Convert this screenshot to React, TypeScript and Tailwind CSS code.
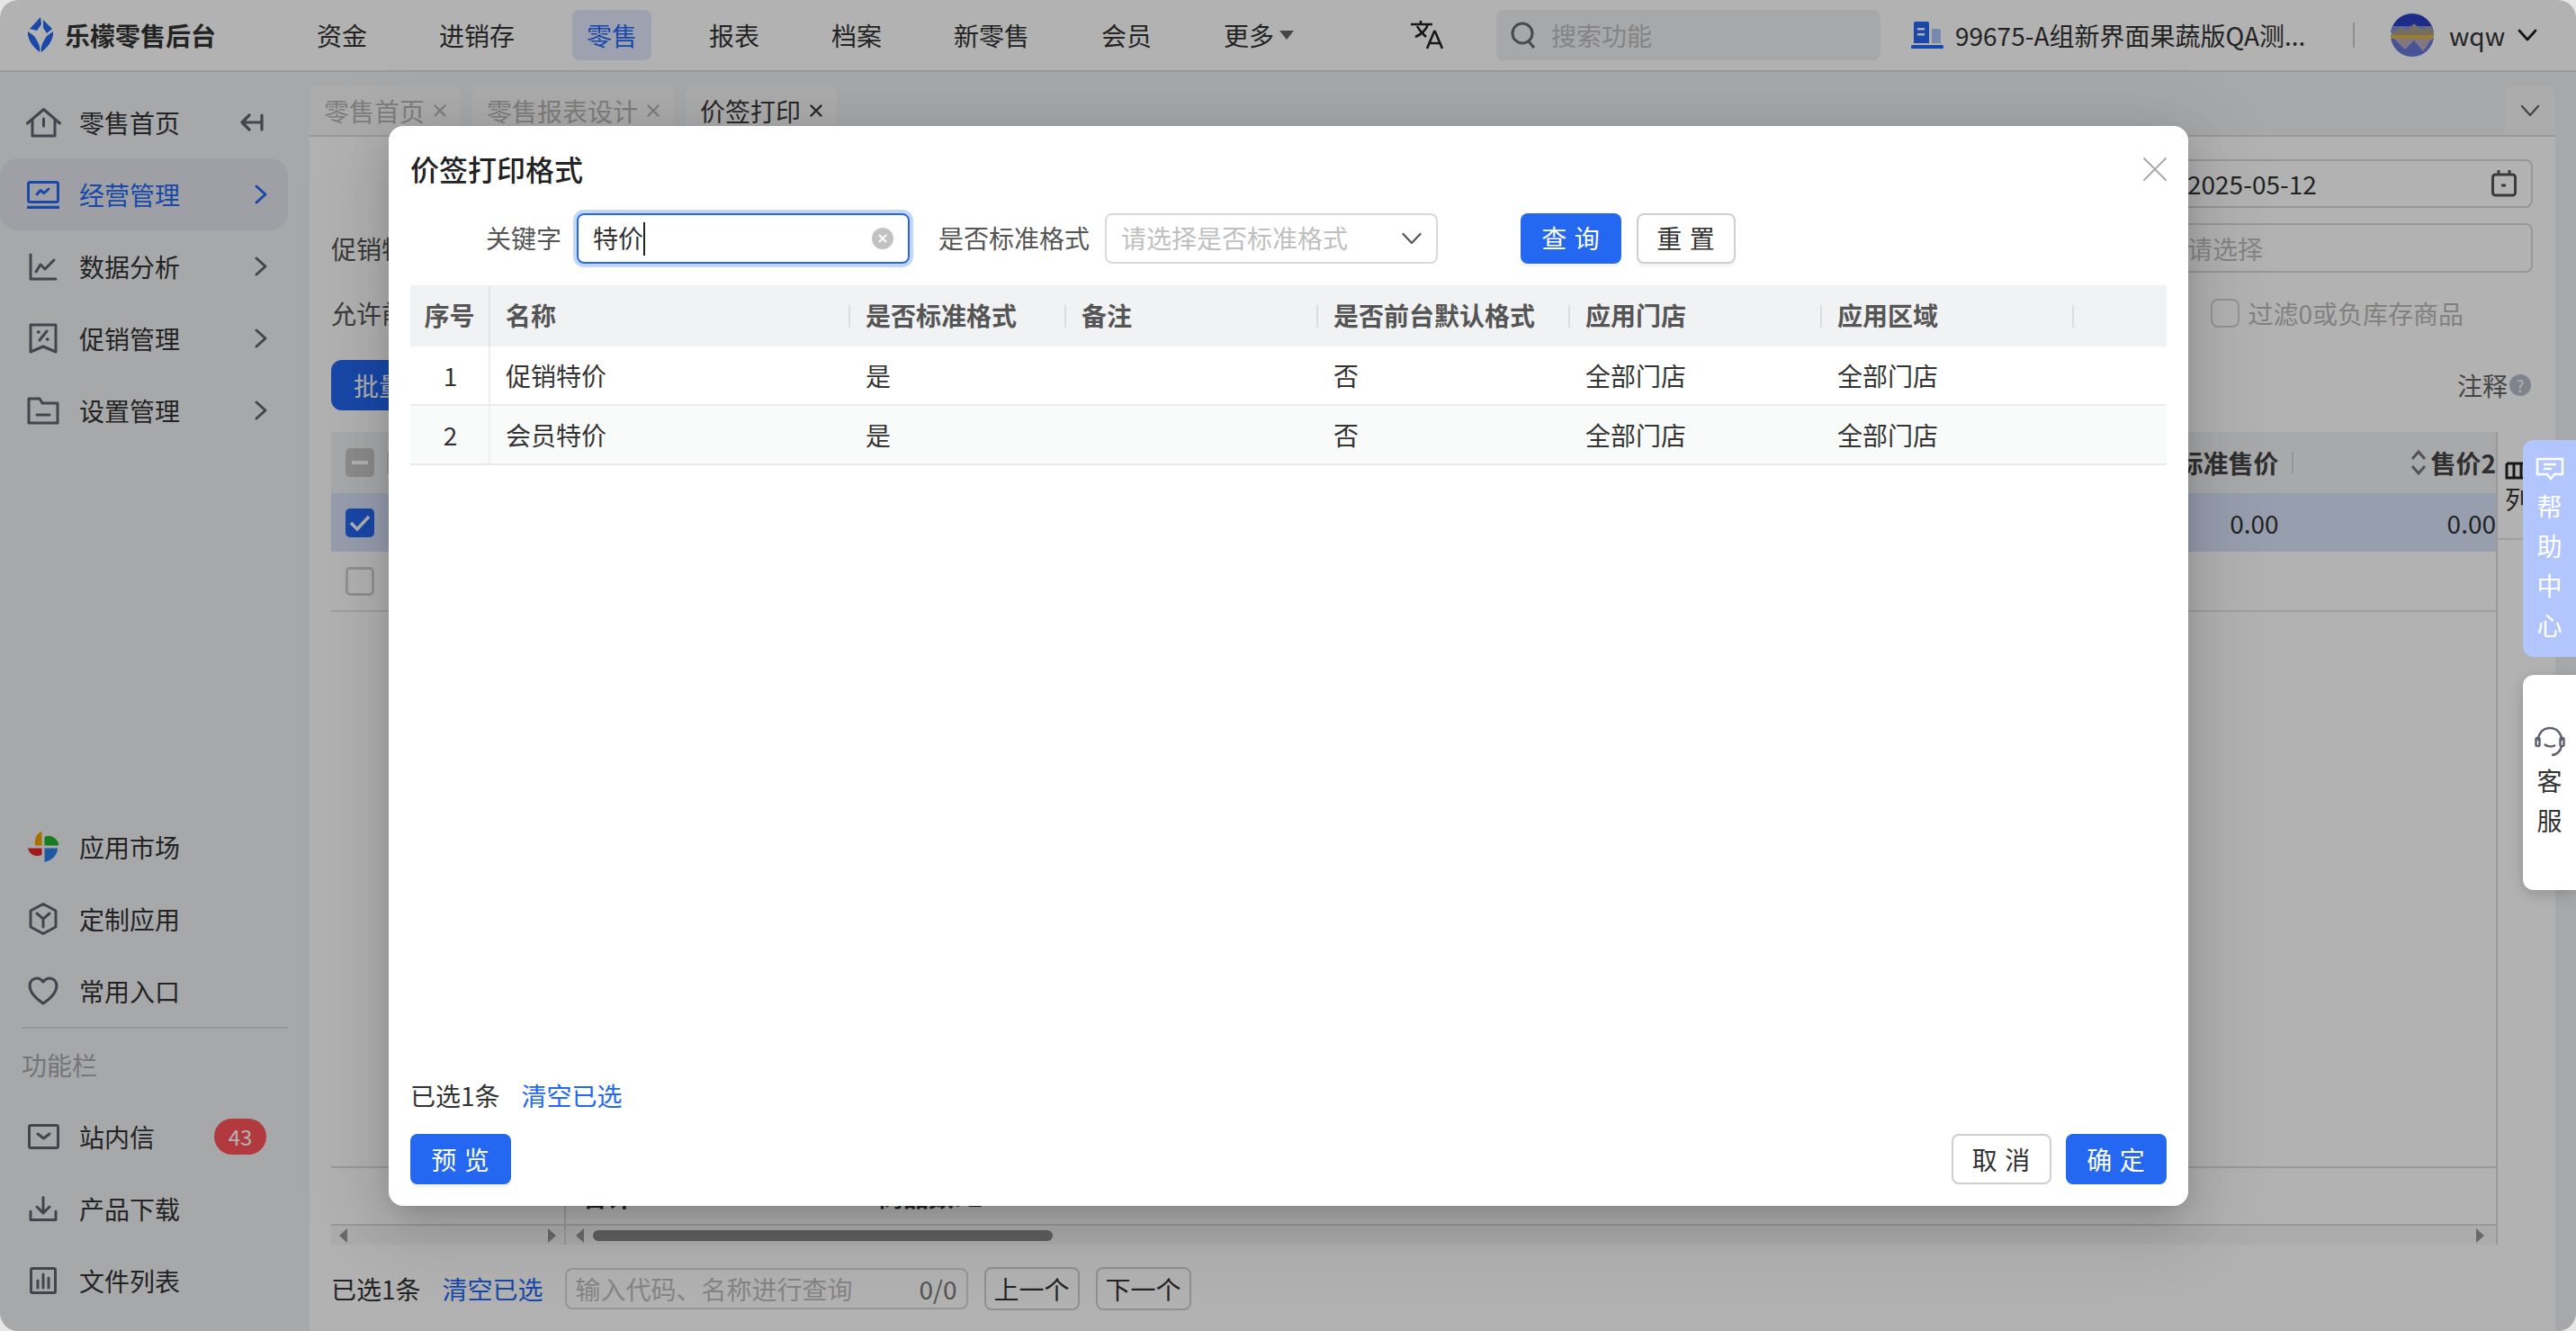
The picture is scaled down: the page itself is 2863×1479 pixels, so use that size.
import React from "react";

type IP = { w: number; h: number; vb?: string; sw?: number; children: React.ReactNode; cls?: string };
const Ic = ({ w, h, vb, sw = 3, children, cls }: IP) => (
  <svg width={w} height={h} viewBox={vb ?? `0 0 ${w} ${h}`} fill="none" stroke="currentColor" strokeWidth={sw} strokeLinecap="round" strokeLinejoin="round" className={cls}>
    {children}
  </svg>
);

const Chevron = ({ blue }: { blue?: boolean }) => (
  <span className={blue ? "ml-auto mr-[18px] text-[#2468f2]" : "ml-auto mr-[18px] text-[#5f6270]"}>
    <Ic w={24} h={24} sw={3}><path d="M7 3 L17 12 L7 21" /></Ic>
  </span>
);

const icons: Record<string, React.ReactNode> = {
  home: <Ic w={39} h={33}><path d="M1.5 17 L19.5 1.5 L37.5 17" /><path d="M7 14 V31 H32 V14" /><path d="M19.5 12 V20" /></Ic>,
  monitor: <Ic w={36} h={31}><rect x="1.5" y="1.5" width="33" height="22" rx="2" /><path d="M1 29.5 H35" strokeWidth="3.4" /><path d="M11 15 L15 10.5 L19 13.5 L24 9" /></Ic>,
  chart: <Ic w={32} h={31}><path d="M2 2 V29 H30" /><path d="M8 21 L13 13 L18 18 L28 8" /></Ic>,
  tag: <Ic w={32} h={35}><path d="M2 2 H30 V32 L16 26 L2 32 Z" /><path d="M20 9 L12 19" /><path d="M10.5 10 h.5 M20.5 18 h.5" strokeWidth="3.4" /></Ic>,
  folder: <Ic w={36} h={31}><path d="M2 2 H14 L17 7 H34 V29 H2 Z" /><path d="M11 20 H25" strokeWidth="3" /></Ic>,
  market: (
    <svg width="34" height="34" viewBox="0 0 34 34">
      <path d="M15.500 0 C9 2 7 9 8 15.500 H15.500 Z" fill="#f2a100" />
      <path d="M18.500 6 C24 3 31 6 34 13 V15.500 H18.500 Z" fill="#1fb32a" />
      <path d="M0 18.500 H15.500 V26 C9 29 2 26 0 18.500 Z" fill="#e8262a" />
      <path d="M18.500 18.500 H33 C33 27 26 32 18.500 34 Z" fill="#2c7ee8" />
    </svg>
  ),
  hex: <Ic w={32} h={36}><path d="M16 1.5 L30 9 V27 L16 34.5 L2 27 V9 Z" /><path d="M9 12 L16 18 L23 12 M16 18 V27" /></Ic>,
  heart: <Ic w={34} h={32}><path d="M17 30 C8 24 2 18 2 10 C2 5 6 2 10 2 C13 2 15 3.500 17 6 C19 3.500 21 2 24 2 C28 2 32 5 32 10 C32 18 26 24 17 30 Z" /></Ic>,
  mail: <Ic w={35} h={28}><rect x="1.5" y="1.5" width="32" height="25" rx="2" /><path d="M11 11 L17.500 16 L24 11" /></Ic>,
  down: <Ic w={32} h={28}><path d="M16 1.500 V18 M9 12 L16 19 L23 12" /><path d="M2 17 V26.500 H30 V17" /></Ic>,
  bars: <Ic w={30} h={30}><rect x="1.500" y="1.500" width="27" height="27" rx="1.500" /><path d="M9 15 V23 M15 8 V23 M21 12 V23" /></Ic>,
};

const SideItem = ({ icon, label, chevron, active, right }: { icon: string; label: string; chevron?: boolean; active?: boolean; right?: React.ReactNode }) => (
  <div className={active ? "flex h-[80px] w-[320px] items-center rounded-[20px] bg-[#e4e5ec] pl-[28px] text-[#2468f2]" : "flex h-[80px] w-[320px] items-center pl-[28px] text-[#333]"}>
    <span className={active ? "flex w-[40px] justify-center text-[#2468f2]" : "flex w-[40px] justify-center text-[#5f6270]"}>{icons[icon]}</span>
    <span className="ml-[20px] text-[28px]">{label}</span>
    {chevron && <Chevron blue={active} />}
    {right}
  </div>
);

const Sidebar = () => (
  <aside className="flex w-[344px] flex-col justify-between pb-[16px] pt-[16px]">
    <div>
      <SideItem
        icon="home"
        label="零售首页"
        right={
          <span className="ml-auto mr-[27px] text-[#5f6270]">
            <Ic w={26} h={20} sw={3.2}><path d="M10 2 L2 10 L10 18 M2 10 H24 M24 2 V18" /></Ic>
          </span>
        }
      />
      <SideItem icon="monitor" label="经营管理" chevron active />
      <SideItem icon="chart" label="数据分析" chevron />
      <SideItem icon="tag" label="促销管理" chevron />
      <SideItem icon="folder" label="设置管理" chevron />
    </div>
    <div>
      <SideItem icon="market" label="应用市场" />
      <SideItem icon="hex" label="定制应用" />
      <SideItem icon="heart" label="常用入口" />
      <div className="ml-[24px] h-[2px] w-[296px] bg-[#d8d9dc]" />
      <div className="flex h-[80px] items-center pl-[24px] text-[28px] text-[#a9a9a9]">功能栏</div>
      <SideItem
        icon="mail"
        label="站内信"
        right={
          <span className="ml-auto mr-[24px] flex h-[40px] w-[58px] items-center justify-center rounded-full bg-[#ff5459] text-[24px] text-white">43</span>
        }
      />
      <SideItem icon="down" label="产品下载" />
      <SideItem icon="bars" label="文件列表" />
    </div>
  </aside>
);

const navItems = ["资金", "进销存", "零售", "报表", "档案", "新零售", "会员"];

const Avatar = () => (
  <svg width="48" height="48" viewBox="0 0 48 48" className="rounded-full">
    <rect width="48" height="20" fill="#2b3fc4" />
    <rect y="14" width="48" height="8" fill="#7c8fe0" />
    <path d="M0 24 L10 15 L18 19 L26 11 L34 18 L42 14 L48 20 V27 H0 Z" fill="#a89c8a" />
    <rect y="24" width="48" height="4" fill="#e0b83c" />
    <rect y="28" width="48" height="20" fill="#6577d8" />
    <path d="M4 28 L16 40 L26 30 L36 42 L46 28 Z" fill="#b9a9bd" />
  </svg>
);

const TopBar = () => (
  <header className="flex h-[80px] items-center border-b-2 border-[#dcdcdc] bg-white pr-[42px]">
    <div className="flex w-[336px] items-center pl-[30px]">
      <svg width="30" height="40" viewBox="0 0 30 40" fill="#2468f2">
        <path d="M15 0 L3 13 L11 15 L16 8 Z" />
        <path d="M18 3 L28 13 L22 18 L18 12 Z" />
        <path d="M1 16 C0 26 8 34 14 39 C15 34 14 30 8 21 Z" />
        <path d="M29 16 C30 26 22 34 16 39 C15 34 16 30 22 21 Z" />
      </svg>
      <span className="ml-[12px] text-[28px] font-bold text-[#333]">乐檬零售后台</span>
    </div>
    <nav className="flex gap-[48px] text-[28px] text-[#333]">
      {navItems.map((n) => (
        <span key={n} className={n === "零售" ? "flex h-[56px] items-center rounded-[8px] bg-[#e3e9fd] px-[16px] text-[#2468f2]" : "flex h-[56px] items-center px-[16px]"}>
          {n}
        </span>
      ))}
      <span className="flex h-[56px] items-center pl-[16px]">
        更多
        <svg width="16" height="12" viewBox="0 0 16 12" className="ml-[6px]"><path d="M0 1 H16 L8 11 Z" fill="#666" /></svg>
      </span>
    </nav>
    <div className="ml-auto flex items-center">
      <span className="text-[#222]">
        <svg width="36" height="32" viewBox="0 0 36 32" fill="none" stroke="currentColor" strokeWidth="2.6">
          <path d="M0 4 H24 M11 0 V4 M5 18 C12 15 17 10 19 4 M7 6 C10 12 14 15 17 18" />
          <path d="M18 31 L26 12 H27 L35 31 M21 25 H32" />
        </svg>
      </span>
      <div className="ml-[59px] flex h-[56px] w-[427px] items-center rounded-[8px] bg-[#f0f1f3] pl-[16px]">
        <span className="text-[#6a6a6a]">
          <svg width="28" height="30" viewBox="0 0 28 30" fill="none" stroke="currentColor" strokeWidth="3"><circle cx="13" cy="13" r="11" /><path d="M20 22 L26 29" /></svg>
        </span>
        <span className="ml-[17px] text-[28px] text-[#bdbdbd]">搜索功能</span>
      </div>
      <svg width="36" height="30" viewBox="0 0 36 30" className="ml-[34px]">
        <path d="M3 2 Q3 0 5 0 H18 Q20 0 20 2 V24 H3 Z" fill="#2468f2" />
        <path d="M23 8 H31 Q33 8 33 10 V24 H23 Z" fill="#a9c4fb" />
        <rect x="0" y="26" width="36" height="4" rx="1.500" fill="#2468f2" />
        <rect x="7" y="7" width="8" height="2.500" fill="#fff" />
        <rect x="7" y="13" width="8" height="2.500" fill="#fff" />
      </svg>
      <span className="ml-[13px] w-[386px] whitespace-nowrap text-[28px] text-[#333]">99675-A组新界面果蔬版QA测...</span>
      <span className="ml-[56px] h-[28px] w-[2px] bg-[#cfcfcf]" />
      <span className="ml-[40px] flex"><Avatar /></span>
      <span className="ml-[17px] w-[57px] text-[28px] text-[#333]">wqw</span>
      <span className="ml-[18px] text-[#222]"><Ic w={24} h={24} sw={2.8}><path d="M3 7 L12 17 L21 7" /></Ic></span>
    </div>
  </header>
);

const Tab = ({ label, active }: { label: string; active?: boolean }) => (
  <div className={active ? "flex h-[54px] items-center gap-[10px] rounded-t-[8px] bg-[#f6f6f7] px-[16px] text-[28px] text-[#3a3a3a]" : "flex h-[54px] items-center gap-[10px] rounded-t-[8px] bg-[#f6f6f7] px-[16px] text-[28px] text-[#b5b5b5]"}>
    <span>{label}</span>
    <Ic w={14} h={14} sw={2.4}><path d="M1.500 1.500 L12.500 12.500 M12.500 1.500 L1.500 12.500" /></Ic>
  </div>
);

const Box = ({ children, cls }: { children?: React.ReactNode; cls: string }) => (
  <span className={"flex h-[32px] w-[32px] items-center justify-center rounded-[5px] " + cls}>{children}</span>
);

const Background = () => (
  <div className="flex h-[1399px]">
    <Sidebar />
    <main className="flex w-[2496px] flex-col">
      <div className="flex h-[70px] items-end gap-[13px] pt-[16px]">
        <Tab label="零售首页" />
        <Tab label="零售报表设计" />
        <Tab label="价签打印" active />
        <div className="ml-auto flex h-[54px] w-[56px] items-center justify-center rounded-t-[8px] bg-[#f6f6f7] text-[#666]">
          <Ic w={22} h={22} sw={2.4}><path d="M2 6 L11 16 L20 6" /></Ic>
        </div>
      </div>
      <div className="flex min-h-0 flex-1 flex-col border-t-2 border-[#dcdcdc] bg-white pl-[24px] pr-[25px] pt-[25px] text-[28px] text-[#333]">
        <div className="flex h-[54px] justify-end">
          <div className="flex h-[54px] w-[402px] items-center rounded-[8px] border-2 border-[#d9d9d9] pl-[16px] pr-[16px]">
            <span>2025-05-12</span>
            <span className="ml-auto text-[#555]">
              <svg width="28" height="30" viewBox="0 0 28 30" fill="none" stroke="currentColor" strokeWidth="3"><rect x="1.500" y="5" width="25" height="23" rx="3" /><path d="M8 0 V5 M20 0 V5 M11 17 H16" /></svg>
            </span>
          </div>
        </div>
        <div className="mt-[17px] flex h-[55px] items-center justify-between">
          <span className="text-[#555]">促销特价</span>
          <div className="flex h-[55px] w-[402px] items-center rounded-[8px] border-2 border-[#d9d9d9] pl-[16px] text-[#bfbfbf]">请选择</div>
        </div>
        <div className="mt-[15px] flex h-[60px] items-center justify-between pr-[77px]">
          <span className="text-[#555]">允许前</span>
          <div className="flex items-center">
            <span className="h-[32px] w-[32px] rounded-[8px] border-2 border-[#d4d4d4]" />
            <span className="ml-[9px] text-[#b8b8b8]">过滤0或负库存商品</span>
          </div>
        </div>
        <div className="mt-[22px] flex h-[56px] items-center justify-between">
          <span className="flex h-[56px] w-[200px] items-center rounded-[12px] bg-[#2468f2] pl-[25px] text-white">批量</span>
          <span className="mr-[2px] flex items-center gap-[2px]">
            <span className="text-[#666]">注释</span>
            <span className="flex h-[24px] w-[24px] items-center justify-center rounded-full bg-[#b5bcc9] text-[18px] text-white">?</span>
          </span>
        </div>
        <div className="mt-[24px] flex h-[903px] text-[28px]">
          <div className="flex min-w-0 flex-1 flex-col border-r-2 border-[#dcdcdc]">
            <div className="flex h-[68px] items-center bg-[#f1f2f4] pl-[16px] font-medium text-[#444]">
              <Box cls="bg-[#c9c9c9]"><span className="h-[4px] w-[18px] bg-white" /></Box>
              <span className="ml-[14px] h-[24px] w-[2px] bg-[#d8d8d8]" />
              <span className="ml-auto flex items-center font-semibold">
                <span>标准售价</span>
                <span className="ml-[15px] h-[24px] w-[2px] bg-[#d8d8d8]" />
                <span className="ml-[130px] text-[#777]">
                  <svg width="18" height="30" viewBox="0 0 18 30" fill="none" stroke="currentColor" strokeWidth="3"><path d="M2 11 L9 3 L16 11 M2 19 L9 27 L16 19" /></svg>
                </span>
                <span className="ml-[4px]">售价2</span>
              </span>
            </div>
            <div className="flex h-[65px] items-center bg-[#d9e3fa] pl-[16px]">
              <Box cls="bg-[#2468f2]">
                <svg width="24" height="20" viewBox="0 0 24 20" fill="none" stroke="#fff" strokeWidth="3.500"><path d="M2 10 L9 17 L22 3" /></svg>
              </Box>
              <span className="ml-auto flex">
                <span className="mr-[187px]">0.00</span>
                <span>0.00</span>
              </span>
            </div>
            <div className="flex h-[67px] items-center border-b-2 border-[#e4e4e4] pl-[16px]">
              <Box cls="border-[3px] border-[#d0d0d0]" />
            </div>
            <div className="flex-1" />
            <div className="flex h-[66px] border-y-2 border-[#dcdcdc] font-semibold">
              <div className="w-[261px] border-r-2 border-[#dcdcdc]" />
              <span className="ml-[18px] flex items-center">合计</span>
              <span className="ml-[273px] flex items-center">商品数: 2</span>
            </div>
            <div className="flex h-[21px] items-center bg-[#f7f7f7]">
              <div className="flex h-full w-[261px] items-center justify-between border-r-2 border-[#dcdcdc] px-[8px]">
                <svg width="10" height="16" viewBox="0 0 10 16"><path d="M10 0 L1 8 L10 16 Z" fill="#999" /></svg>
                <svg width="10" height="16" viewBox="0 0 10 16"><path d="M0 0 L9 8 L0 16 Z" fill="#999" /></svg>
              </div>
              <svg width="10" height="16" viewBox="0 0 10 16" className="ml-[10px]"><path d="M10 0 L1 8 L10 16 Z" fill="#999" /></svg>
              <span className="ml-[10px] h-[12px] w-[511px] rounded-full bg-[#888]" />
              <svg width="10" height="16" viewBox="0 0 10 16" className="ml-auto mr-[12px]"><path d="M0 0 L9 8 L0 16 Z" fill="#999" /></svg>
            </div>
          </div>
          <div className="flex w-[39px] flex-col">
            <div className="h-[120px] border-b-2 border-[#e4e4e4] pl-[8px] pt-[33px] leading-[38px]">
              <svg width="28" height="20" viewBox="0 0 28 20" fill="none" stroke="#222" strokeWidth="3"><path d="M2 2 H26 M2 2 V18 H26 V2 M10 2 V18 M18 2 V18" /></svg>
              <span className="mt-[2px] block">列</span>
            </div>
          </div>
        </div>
        <div className="mt-[25px] flex h-[48px] items-center">
          <span>已选1条</span>
          <span className="ml-[24px] text-[#2468f2]">清空已选</span>
          <div className="ml-[24px] flex h-[46px] w-[448px] items-center justify-between rounded-[8px] border-2 border-[#d9d9d9] pl-[10px] pr-[10px]">
            <span className="text-[#bfbfbf]">输入代码、名称进行查询</span>
            <span className="text-[#777]">0/0</span>
          </div>
          <span className="ml-[18px] flex h-[48px] w-[106px] items-center justify-center rounded-[8px] border-2 border-[#cfcfcf]">上一个</span>
          <span className="ml-[18px] flex h-[48px] w-[106px] items-center justify-center rounded-[8px] border-2 border-[#cfcfcf]">下一个</span>
        </div>
      </div>
    </main>
    <div className="w-[23px]" />
  </div>
);

const cols = "grid grid-cols-[89px_400px_240px_280px_280px_280px_280px_103px]";
const heads = ["名称", "是否标准格式", "备注", "是否前台默认格式", "应用门店", "应用区域"];
const rows = [
  { no: "1", name: "促销特价", cls: "bg-white border-b-2 border-[#e9ebec]" },
  { no: "2", name: "会员特价", cls: "bg-[#f9fafa] border-b-2 border-[#e9ebec]" },
];

const Modal = () => (
  <div className="absolute left-[432px] top-[140px] z-20 flex h-[1200px] w-[2000px] flex-col rounded-[16px] bg-white px-[24px] pb-[24px] pt-[24px] text-[28px] text-[#333] shadow-[0_10px_28px_-14px_rgba(0,0,0,0.2),0_16px_50px_0_rgba(0,0,0,0.12),0_21px_84px_28px_rgba(0,0,0,0.08)]">
    <div className="flex h-[48px] items-center justify-between">
      <span className="pb-[2px] text-[32px] font-medium text-[#222]">价签打印格式</span>
      <span className="text-[#a6a6a6]">
        <Ic w={26} h={26} sw={1.800}><path d="M1 1 L25 25 M25 1 L1 25" /></Ic>
      </span>
    </div>
    <div className="mt-[25px] flex h-[56px] items-center">
      <span className="w-[168px] pb-[2px] text-right text-[#555]">关键字</span>
      <div className="ml-[17px] flex h-[56px] w-[370px] items-center rounded-[8px] border-2 border-[#2468f2] pl-[16px] pr-[16px] shadow-[0_0_0_4px_#c3d7fc]">
        <span className="pb-[2px]">特价</span>
        <span className="h-[37px] w-[2px] bg-[#222]" />
        <span className="ml-auto flex h-[24px] w-[24px] items-center justify-center rounded-full bg-[#c2c2c2]">
          <svg width="12" height="12" viewBox="0 0 12 12" fill="none" stroke="#fff" strokeWidth="2"><path d="M2 2 L10 10 M10 2 L2 10" /></svg>
        </span>
      </div>
      <span className="ml-[32px] w-[168px] pb-[2px] text-[#555]">是否标准格式</span>
      <div className="ml-[17px] flex h-[56px] w-[370px] items-center rounded-[8px] border-2 border-[#d9d9d9] pl-[16px] pr-[16px]">
        <span className="pb-[2px] text-[#bfbfbf]">请选择是否标准格式</span>
        <span className="ml-auto text-[#555]">
          <Ic w={22} h={22} sw={2.200}><path d="M1.500 6 L11 16 L20.500 6" /></Ic>
        </span>
      </div>
      <span className="ml-[92px] flex h-[56px] w-[112px] items-center justify-center rounded-[8px] bg-[#2468f2] pb-[2px] tracking-[1px] text-white shadow-[0_4px_0_rgba(0,0,0,0.04)]">查 询</span>
      <span className="ml-[17px] flex h-[56px] w-[110px] items-center justify-center rounded-[8px] border-2 border-[#cfcfcf] bg-white pb-[2px] tracking-[1px] shadow-[0_4px_0_rgba(0,0,0,0.04)]">重 置</span>
    </div>
    <div className="mt-[24px] flex-1">
      <div className={cols + " h-[68px] bg-[#f1f2f4] font-semibold text-[#555]"}>
        <span className="flex items-center justify-center border-r-2 border-[#e4e5e7] pb-[2px]">序号</span>
        {heads.map((h) => (
          <span key={h} className="flex items-center justify-between pl-[17px]">
            <span className="pb-[2px]">{h}</span>
            <span className="h-[25px] w-[2px] bg-[#dcdddf]" />
          </span>
        ))}
        <span />
      </div>
      {rows.map((r) => (
        <div key={r.no} className={cols + " h-[66px] " + r.cls}>
          <span className="flex items-center justify-center border-r-2 border-[#eeeeee] pl-[2px]">{r.no}</span>
          <span className="flex items-center pl-[17px]">{r.name}</span>
          <span className="flex items-center pl-[17px]">是</span>
          <span />
          <span className="flex items-center pl-[17px]">否</span>
          <span className="flex items-center pl-[17px]">全部门店</span>
          <span className="flex items-center pl-[17px]">全部门店</span>
          <span />
        </div>
      ))}
    </div>
    <div className="flex h-[42px] items-center pb-[3px]">
      <span>已选1条</span>
      <span className="ml-[24px] text-[#2468f2]">清空已选</span>
    </div>
    <div className="mt-[21px] flex items-center justify-between">
      <span className="flex h-[56px] w-[112px] items-center justify-center rounded-[8px] bg-[#2468f2] tracking-[1px] text-white shadow-[0_4px_0_rgba(0,0,0,0.04)]">预 览</span>
      <div className="flex gap-[16px]">
        <span className="flex h-[56px] w-[111px] items-center justify-center rounded-[8px] border-2 border-[#cfcfcf] bg-white tracking-[1px]">取 消</span>
        <span className="flex h-[56px] w-[112px] items-center justify-center rounded-[8px] bg-[#2468f2] tracking-[1px] text-white">确 定</span>
      </div>
    </div>
  </div>
);

const SideTabs = () => (
  <div className="absolute right-0 top-[489px] z-10 flex w-[59px] flex-col gap-[20px] text-[28px] leading-[44px]">
    <div className="flex h-[241px] flex-col items-center rounded-l-[12px] bg-[#b3c5fd] pt-[19px] text-white">
      <svg width="32" height="26" viewBox="0 0 32 26" fill="none" stroke="currentColor" strokeWidth="2.500" className="mb-[6px]">
        <path d="M2 2 H30 V19 H21 L17 24 L13 19 H2 Z" /><path d="M9 8 H23 M9 13 H18" />
      </svg>
      <span>帮</span><span>助</span><span>中</span><span>心</span>
    </div>
    <div className="flex h-[239px] flex-col items-center justify-center rounded-l-[12px] bg-white text-[#333] shadow-[0_4px_16px_rgba(0,0,0,0.18)]">
      <svg width="34" height="34" viewBox="0 0 34 34" fill="none" stroke="#5f6270" strokeWidth="2.500">
        <path d="M4 16 C4 7 10 2 17 2 C24 2 30 7 30 16" /><rect x="1.500" y="13" width="4" height="9" rx="1.500" /><rect x="28.500" y="13" width="4" height="9" rx="1.500" /><path d="M11 20 C14 23 20 23 23 21 M30 22 C29 28 24 32 19 32" />
      </svg>
      <span className="mt-[4px]">客</span><span>服</span>
    </div>
  </div>
);

export default function App() {
  return (
    <div className="h-[1479px] w-[2863px] overflow-hidden bg-[#e6e6e6] [font-family:'Noto_Sans_CJK_SC','Noto_Sans',sans-serif]">
      <div className="relative h-[1479px] w-[2863px] overflow-hidden rounded-[20px] bg-[#f0f1f4]">
        <TopBar />
        <Background />
        <div className="absolute inset-0 bg-black/30" />
        <SideTabs />
        <Modal />
      </div>
    </div>
  );
}
